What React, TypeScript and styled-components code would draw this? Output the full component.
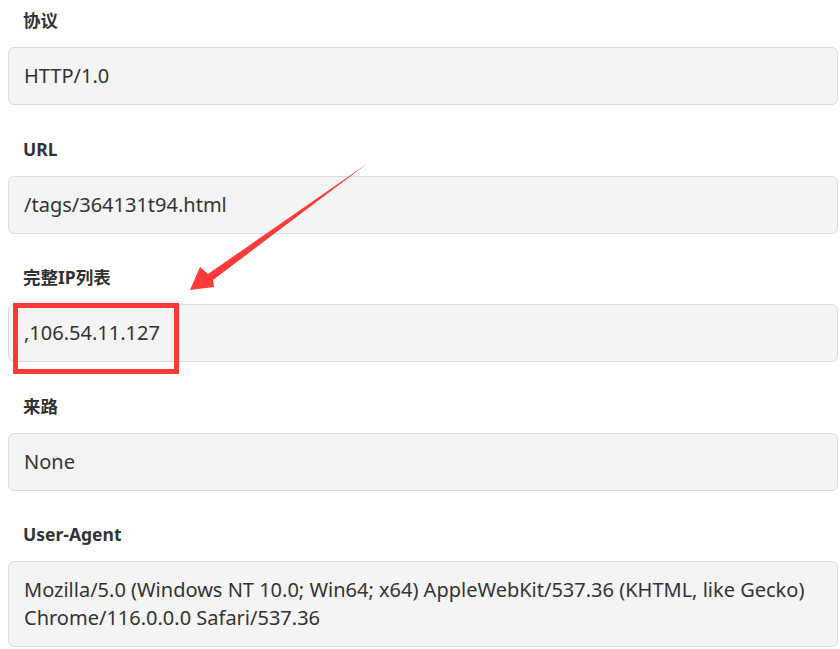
import React from "react";
import styled, { createGlobalStyle } from "styled-components";

const GlobalStyle = createGlobalStyle`
    body {
        margin: 0;
        background: #ffffff;
        font-family: "Noto Sans", "Noto Sans CJK SC", sans-serif;
        color: #333333;
    }
`;

const Page = styled.div`
    position: relative;
    padding: 8px 2px 8px 8px;
`;

const Field = styled.div`
    display: flex;
    flex-direction: column;
    & + & {
        margin-top: 31.5px;
    }
`;

const Label = styled.div`
    font-size: 17.5px;
    font-weight: 700;
    line-height: 24px;
    padding-left: 15px;
    margin-bottom: 15px;
    color: #333333;
`;

const Value = styled.div`
    background: #f4f4f4;
    border: 1px solid #dcdcdc;
    border-radius: 6px;
    padding: 14px 15px;
    font-size: 20px;
    line-height: 28px;
    color: #333333;
    word-break: break-word;
`;

const Highlight = styled.div`
    position: absolute;
    left: 13px;
    top: 303px;
    width: 156px;
    height: 61px;
    border: 5px solid #fe3a3a;
`;

const ArrowLayer = styled.svg`
    position: absolute;
    left: 0;
    top: 0;
    pointer-events: none;
`;

const fields = [
    { label: "协议", value: "HTTP/1.0" },
    { label: "URL", value: "/tags/364131t94.html" },
    { label: "完整IP列表", value: ",106.54.11.127" },
    { label: "来路", value: "None" },
    {
        label: "User-Agent",
        value: "Mozilla/5.0 (Windows NT 10.0; Win64; x64) AppleWebKit/537.36 (KHTML, like Gecko) Chrome/116.0.0.0 Safari/537.36",
    },
];

const App = () => {
    return (
        <Page>
            <GlobalStyle />
            {fields.map((f) => (
                <Field key={f.label}>
                    <Label>{f.label}</Label>
                    <Value>{f.value}</Value>
                </Field>
            ))}
            <Highlight />
            <ArrowLayer width="840" height="649" viewBox="0 0 840 649">
                <polygon
                    points="368,163 208,274 200,267 190,290 214,287 213,280"
                    fill="#fe3a3a"
                />
            </ArrowLayer>
        </Page>
    );
};

export default App;
